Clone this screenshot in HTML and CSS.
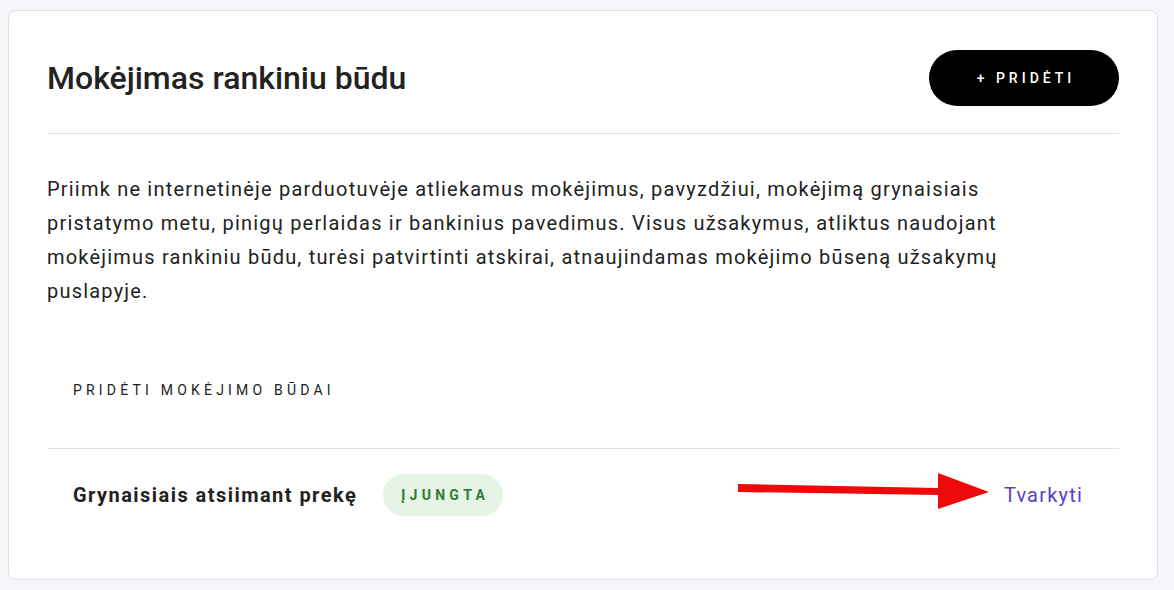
FILE: index.html
```html
<!DOCTYPE html>
<html lang="lt">
<head>
<meta charset="utf-8">
<title>Mokėjimas rankiniu būdu</title>
<link rel="stylesheet" href="styles.css">
</head>
<body>
<div class="card">
  <div class="header">
    <h1 class="title">Mokėjimas rankiniu būdu</h1>
    <button class="add-btn">+ PRIDĖTI</button>
  </div>
  <p class="desc">Priimk ne internetinėje parduotuvėje atliekamus mokėjimus, pavyzdžiui, mokėjimą grynaisiais pristatymo metu, pinigų perlaidas ir bankinius pavedimus. Visus užsakymus, atliktus naudojant mokėjimus rankiniu būdu, turėsi patvirtinti atskirai, atnaujindamas mokėjimo būseną užsakymų puslapyje.</p>
  <div class="section-title">PRIDĖTI MOKĖJIMO BŪDAI</div>
  <div class="method-row">
    <div class="method-left">
      <span class="method-name">Grynaisiais atsiimant prekę</span>
      <span class="badge">ĮJUNGTA</span>
    </div>
    <a class="manage" href="#">Tvarkyti</a>
    <svg class="arrow" width="260" height="40" viewBox="0 0 260 40">
      <polygon points="0,11 200,15 200,22 0,19" fill="#ee0a0a"/>
      <polygon points="200,0 251,19 200,36" fill="#ee0a0a"/>
    </svg>
  </div>
</div>
</body>
</html>
```
FILE: styles.css
```css
* { box-sizing: border-box; }
html, body { margin: 0; }
body {
  background: #f5f6fa;
  padding: 10px 16px 0 8px;
  font-family: Roboto, "Liberation Sans", Arial, sans-serif;
  color: #222;
  height: 590px;
  overflow: hidden;
}
.card {
  background: #fff;
  border: 1px solid #dedfe4;
  border-radius: 8px;
  padding: 0 38px;
  height: 570px;
}
.header {
  display: flex;
  align-items: center;
  justify-content: space-between;
  padding: 39px 0 27px;
  border-bottom: 1px solid #e2e2e2;
}
.title {
  margin: 0;
  font-size: 32px;
  font-weight: 500;
  color: #222;
  line-height: 36px;
}
.add-btn {
  width: 190px;
  height: 56px;
  border: none;
  border-radius: 28px;
  background: #000;
  color: #fff;
  font-family: Roboto, "Liberation Sans", Arial, sans-serif;
  font-size: 14px;
  font-weight: 500;
  letter-spacing: 4px;
  padding: 0 0 0 4px;
}
.desc {
  margin: 38px 0 0;
  padding-right: 60px;
  font-size: 20px;
  line-height: 34px;
  letter-spacing: 1.2px;
  color: #222;
}
.section-title {
  margin-top: 72px;
  padding: 0 26px 48px;
  font-size: 14px;
  line-height: 20px;
  letter-spacing: 4.2px;
  color: #222;
  border-bottom: 1px solid #e2e2e2;
}
.method-row {
  position: relative;
  display: flex;
  justify-content: space-between;
  align-items: center;
  padding: 25px 36px 0 26px;
}
.method-left {
  display: flex;
  align-items: center;
  gap: 26px;
}
.method-name {
  font-size: 20px;
  font-weight: 700;
  letter-spacing: 1.45px;
  color: #222;
}
.badge {
  display: inline-flex;
  align-items: center;
  justify-content: center;
  width: 120px;
  height: 42px;
  border-radius: 21px;
  background: #e5f4e5;
  color: #2e7d32;
  font-size: 14px;
  font-weight: 700;
  letter-spacing: 4.3px;
  padding-left: 4px;
}
.manage {
  font-size: 20px;
  color: #5a3fc2;
  letter-spacing: 1.2px;
  text-decoration: none;
}
.arrow {
  position: absolute;
  left: 691px;
  top: 24px;
}
```
